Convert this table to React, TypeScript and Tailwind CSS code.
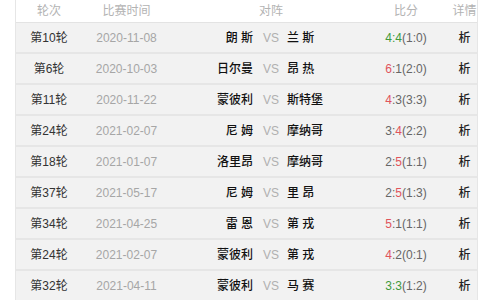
import React from 'react';

type Match = {
  round: string;
  date: string;
  home: string;
  away: string;
  hs: number;
  as: number;
  half: string;
};

const matches: Match[] = [
  { round: '第10轮', date: '2020-11-08', home: '朗 斯', away: '兰 斯', hs: 4, as: 4, half: '(1:0)' },
  { round: '第6轮', date: '2020-10-03', home: '日尔曼', away: '昂 热', hs: 6, as: 1, half: '(2:0)' },
  { round: '第11轮', date: '2020-11-22', home: '蒙彼利', away: '斯特堡', hs: 4, as: 3, half: '(3:3)' },
  { round: '第24轮', date: '2021-02-07', home: '尼 姆', away: '摩纳哥', hs: 3, as: 4, half: '(2:2)' },
  { round: '第18轮', date: '2021-01-07', home: '洛里昂', away: '摩纳哥', hs: 2, as: 5, half: '(1:1)' },
  { round: '第37轮', date: '2021-05-17', home: '尼 姆', away: '里 昂', hs: 2, as: 5, half: '(1:3)' },
  { round: '第34轮', date: '2021-04-25', home: '雷 恩', away: '第 戎', hs: 5, as: 1, half: '(1:1)' },
  { round: '第24轮', date: '2021-02-07', home: '蒙彼利', away: '第 戎', hs: 4, as: 2, half: '(0:1)' },
  { round: '第32轮', date: '2021-04-11', home: '蒙彼利', away: '马 赛', hs: 3, as: 3, half: '(1:2)' },
];

// column widths add up to the 461px inside the table borders
const cols = 'grid grid-cols-[66px_89px_87px_26px_86px_72px_35px]';

const Score: React.FC<{ m: Match }> = ({ m }) => {
  const draw = m.hs === m.as;
  if (draw) {
    return (
      <span>
        <span className="text-[#3f9a3c]">{m.hs}:{m.as}</span>
        <span className="text-[#666]">{m.half}</span>
      </span>
    );
  }
  return (
    <span className="text-[#666]">
      <span className={m.hs > m.as ? 'text-[#e0545c]' : ''}>{m.hs}</span>:
      <span className={m.as > m.hs ? 'text-[#e0545c]' : ''}>{m.as}</span>
      {m.half}
    </span>
  );
};

export default function App() {
  return (
    <div
      className="w-[500px] h-[300px] overflow-hidden bg-white pl-[15px] pr-[22px]"
      style={{ fontFamily: '"Liberation Sans", "Noto Sans CJK SC", sans-serif' }}
    >
      <div className="w-[463px] border-l border-r border-[#e6e6e6]">
        <div className={`${cols} h-[23px] items-center bg-white text-[12px] text-[#b3b3b3] border-b border-[#e3e3e3]`}>
          <div className="text-center">轮次</div>
          <div className="text-center">比赛时间</div>
          <div />
          <div className="text-center">对阵</div>
          <div />
          <div className="text-center">比分</div>
          <div className="pl-[10px] text-center whitespace-nowrap">详情</div>
        </div>
        {matches.map((m, i) => (
          <div
            key={i}
            className={`${cols} h-[31px] items-center bg-[#f2f2f2] text-[12px] border-b-2 border-[#e6e6e6]`}
          >
            <div className="text-center text-[#333]">{m.round}</div>
            <div className="text-center text-[#a6a6a6]">{m.date}</div>
            <div className="text-right pr-[5px] font-medium text-[#111]">{m.home}</div>
            <div className="text-center text-[#b0b0b0]">VS</div>
            <div className="pl-[3px] font-medium text-[#111]">{m.away}</div>
            <div className="text-center">
              <Score m={m} />
            </div>
            <div className="pl-[10px] text-center text-[#222] font-medium">析</div>
          </div>
        ))}
      </div>
    </div>
  );
}
